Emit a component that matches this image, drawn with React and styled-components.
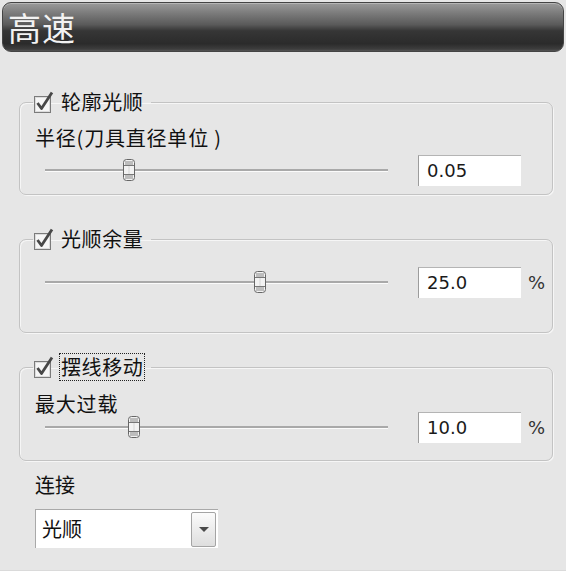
import React from "react";
import styled, { createGlobalStyle } from "styled-components";

const GlobalStyle = createGlobalStyle`
  html, body {
    margin: 0;
    padding: 0;
    background: #ffffff;
  }
  body {
    font-family: "Noto Sans CJK SC", "DejaVu Sans", sans-serif;
    color: #111;
  }
`;

const groups = [
  { id: "smooth", title: "轮廓光顺", label: "半径(刀具直径单位 )", value: "0.05", unit: "", pos: 0.245, top: 40, labelGap: 15, labelLine: 22, rowGap: 6, bottom: 8 },
  { id: "stock", title: "光顺余量", label: null, value: "25.0", unit: "%", pos: 0.627, top: 34, rowGap: 18, bottom: 34 },
  { id: "troch", title: "摆线移动", label: "最大过载", value: "10.0", unit: "%", pos: 0.26, top: 24, labelGap: 19, labelLine: 16, rowGap: 0, bottom: 17, focused: true },
];

const CheckIcon = () => (
  <svg width="20" height="22" viewBox="0 0 20 22">
    <rect x="0.5" y="5.5" width="16" height="16" fill="#f6f6f6" stroke="#7b7b7b" />
    <rect x="1.5" y="6.5" width="14" height="14" fill="none" stroke="#dcdcdc" />
    <path d="M3.5 12 L7.5 17.5 L18 1.5" fill="none" stroke="#484848" strokeWidth="2.8" strokeLinejoin="round" />
  </svg>
);

const ThumbIcon = () => (
  <svg width="12" height="22" viewBox="0 0 12 22">
    <rect x="0.5" y="0.5" width="11" height="21" rx="3" fill="#f2f2f2" stroke="#666" />
    <rect x="2" y="2" width="8" height="4" fill="#bdbdbd" />
    <rect x="2" y="16" width="8" height="4" fill="#bdbdbd" />
    <line x1="1" y1="6.5" x2="11" y2="6.5" stroke="#777" />
    <line x1="1" y1="15.5" x2="11" y2="15.5" stroke="#777" />
    <line x1="6" y1="7" x2="6" y2="15" stroke="#d6d6d6" />
  </svg>
);

const Slider = ({ pos }) => (
  <Track>
    <Thumb style={{ left: `calc(${pos * 100}% - 6px)` }}>
      <ThumbIcon />
    </Thumb>
  </Track>
);

const App = () => {
  return (
    <Panel>
      <GlobalStyle />
      <Header>
        <Title>高速</Title>
      </Header>
      {groups.map((g) => (
        <Group key={g.id} $top={g.top} $bottom={g.bottom}>
          <Legend>
            <CheckIcon />
            <LegendText $focused={g.focused}>{g.title}</LegendText>
          </Legend>
          {g.label && (
            <FieldLabel $gap={g.labelGap} $line={g.labelLine}>
              {g.label}
            </FieldLabel>
          )}
          <SliderRow $gap={g.rowGap}>
            <Slider pos={g.pos} />
            <ValueBox>{g.value}</ValueBox>
            <Unit>{g.unit}</Unit>
          </SliderRow>
        </Group>
      ))}
      <ConnectLabel>连接</ConnectLabel>
      <Combo>
        <ComboText>光顺</ComboText>
        <ComboButton>
          <Arrow />
        </ComboButton>
      </Combo>
    </Panel>
  );
};

const Panel = styled.div`
  width: 566px;
  height: 571px;
  background: #e6e6e6;
  display: flex;
  flex-direction: column;
  padding-top: 2px;
  box-sizing: border-box;
  border-bottom: 1px solid #dadada;
`;

const Header = styled.div`
  margin: 0 2px;
  height: 50px;
  box-sizing: border-box;
  border: 1px solid #444;
  border-radius: 9px;
  background: linear-gradient(
    to bottom,
    #9a9a9a 0%,
    #7a7a7a 22%,
    #5a5a5a 45%,
    #363636 58%,
    #2b2b2b 85%,
    #3d3d3d 96%,
    #555 100%
  );
  box-shadow: inset 0 1px 0 #b5b5b5;
  display: flex;
  align-items: center;
  padding-left: 5px;
`;

const Title = styled.span`
  font-size: 33px;
  line-height: 1;
  color: #f2f2f2;
  letter-spacing: 1px;
`;

const Group = styled.fieldset`
  margin: ${(p) => p.$top}px 13px 0 19px;
  padding: 0 0 ${(p) => p.$bottom}px 0;
  border: 1px solid #c3c3c3;
  border-radius: 7px;
  box-shadow: inset 1px 1px 0 #f6f6f6, 1px 1px 0 #f6f6f6;
  min-width: 0;
`;

const Legend = styled.legend`
  display: flex;
  align-items: center;
  gap: 6px;
  height: 20px;
  margin-left: 13px;
  padding: 0 7px 0 1px;
`;

const LegendText = styled.span`
  font-size: 20px;
  letter-spacing: 0.6px;
  line-height: 20px;
  padding: 3px 1px;
  outline: ${(p) => (p.$focused ? "1px dotted #222" : "none")};
`;

const FieldLabel = styled.div`
  margin: ${(p) => p.$gap}px 0 0 15px;
  font-size: 20px;
  letter-spacing: 0.8px;
  line-height: ${(p) => p.$line}px;
`;

const SliderRow = styled.div`
  display: flex;
  align-items: center;
  height: 31px;
  margin-top: ${(p) => p.$gap}px;
  padding-left: 25px;
`;

const Track = styled.div`
  position: relative;
  flex: 1;
  height: 2px;
  background: #a9a9a9;
  border-bottom: 1px solid #fbfbfb;
`;

const Thumb = styled.div`
  position: absolute;
  top: -10px;
  width: 12px;
  height: 22px;
  line-height: 0;
`;

const ValueBox = styled.div`
  margin-left: 30px;
  width: 103px;
  height: 31px;
  box-sizing: border-box;
  background: #fff;
  border-top: 1px solid #b4b4b4;
  border-left: 1px solid #9c9c9c;
  padding-left: 8px;
  font-family: "DejaVu Sans", sans-serif;
  font-size: 18px;
  line-height: 30px;
  color: #1a1a1a;
`;

const Unit = styled.div`
  width: 31px;
  box-sizing: border-box;
  padding-left: 7px;
  font-family: "DejaVu Sans", sans-serif;
  font-size: 18px;
  color: #333;
`;

const ConnectLabel = styled.div`
  margin: 13px 0 0 35px;
  font-size: 20px;
  line-height: 22px;
`;

const Combo = styled.div`
  margin: 13px 0 0 35px;
  width: 183px;
  height: 39px;
  box-sizing: border-box;
  background: #fff;
  border-top: 1px solid #a9a9a9;
  border-left: 1px solid #a9a9a9;
  display: flex;
  align-items: center;
  padding: 1px 2px 1px 6px;
`;

const ComboText = styled.span`
  flex: 1;
  font-size: 20px;
  line-height: 22px;
`;

const ComboButton = styled.div`
  width: 25px;
  height: 35px;
  box-sizing: border-box;
  border: 1px solid #a4a4a4;
  border-radius: 2px;
  background: linear-gradient(to bottom, #fbfbfb, #dedede);
  display: flex;
  align-items: center;
  justify-content: center;
`;

const Arrow = styled.div`
  width: 0;
  height: 0;
  border-left: 5px solid transparent;
  border-right: 5px solid transparent;
  border-top: 5px solid #4a4a4a;
`;

export default App;
